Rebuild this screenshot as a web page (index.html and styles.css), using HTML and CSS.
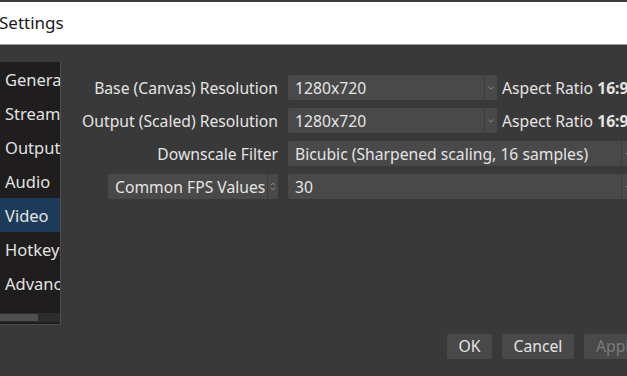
FILE: index.html
```html
<!DOCTYPE html>
<html>
<head>
<meta charset="utf-8">
<link rel="stylesheet" href="styles.css">
</head>
<body>
<div class="topline"></div>
<div class="titlebar"><span class="title">Settings</span></div>
<div class="window">
  <div class="main">
    <div class="sidebar">
      <ul class="list">
        <li class="item">General</li>
        <li class="item">Stream</li>
        <li class="item">Output</li>
        <li class="item">Audio</li>
        <li class="item selected">Video</li>
        <li class="item">Hotkeys</li>
        <li class="item">Advanced</li>
      </ul>
      <div class="hscroll"><div class="thumb"></div></div>
    </div>
    <div class="form">
      <div class="row">
        <div class="label">Base (Canvas) Resolution</div>
        <div class="field combo short"><span class="value">1280x720</span><span class="arrow"><svg width="6" height="4" viewBox="0 0 6 4"><path d="M0.5 0.8 L3 3.2 L5.5 0.8" fill="none" stroke="#8e8d8d" stroke-width="1"/></svg></span></div>
        <div class="aspect">Aspect Ratio <b>16:9</b></div>
      </div>
      <div class="row">
        <div class="label">Output (Scaled) Resolution</div>
        <div class="field combo short"><span class="value">1280x720</span><span class="arrow"><svg width="6" height="4" viewBox="0 0 6 4"><path d="M0.5 0.8 L3 3.2 L5.5 0.8" fill="none" stroke="#8e8d8d" stroke-width="1"/></svg></span></div>
        <div class="aspect">Aspect Ratio <b>16:9</b></div>
      </div>
      <div class="row">
        <div class="label">Downscale Filter</div>
        <div class="field combo long"><span class="value">Bicubic (Sharpened scaling, 16 samples)</span><span class="arrow"><svg width="6" height="4" viewBox="0 0 6 4"><path d="M0.5 0.8 L3 3.2 L5.5 0.8" fill="none" stroke="#8e8d8d" stroke-width="1"/></svg></span></div>
      </div>
      <div class="row">
        <div class="label"><div class="field fps"><span class="value">Common FPS Values</span><span class="updown"><svg width="6" height="9" viewBox="0 0 6 9"><path d="M1 3.2 L3 1.2 L5 3.2 M1 5.8 L3 7.8 L5 5.8" fill="none" stroke="#8e8d8d" stroke-width="1"/></svg></span></div></div>
        <div class="field combo long"><span class="value">30</span><span class="arrow"><svg width="6" height="4" viewBox="0 0 6 4"><path d="M0.5 0.8 L3 3.2 L5.5 0.8" fill="none" stroke="#8e8d8d" stroke-width="1"/></svg></span></div>
      </div>
    </div>
  </div>
  <div class="buttons">
    <div class="btn ok">OK</div>
    <div class="btn cancel">Cancel</div>
    <div class="btn apply disabled">Apply</div>
  </div>
</div>
</body>
</html>
```

FILE: styles.css
```css
html, body {
  margin: 0;
  padding: 0;
  width: 627px;
  height: 376px;
  overflow: hidden;
  background: #3a3939;
  font-family: "Noto Sans", "Open Sans", sans-serif;
  color: #e4e4e4;
}

.topline {
  height: 2px;
  background: #3c3c3c;
}

.titlebar {
  height: 42px;
  background: #ffffff;
  border-bottom: 1px solid #9a9a9a;
  display: flex;
  align-items: center;
}

.title {
  font-size: 17px;
  color: #1a1a1a;
  margin-left: -1px;
  margin-top: -2px;
}

.window {
  height: 331px;
  display: flex;
  flex-direction: column;
}

.main {
  display: flex;
  flex: 1;
}

.sidebar {
  width: 60px;
  flex-shrink: 0;
  height: 262px;
  margin-top: 17px;
  background: #1f1d1d;
  border-right: 1px solid #4d4c4c;
  border-bottom: 1px solid #4d4c4c;
  display: flex;
  flex-direction: column;
  overflow: hidden;
}

.list {
  list-style: none;
  margin: 0;
  padding: 0;
  flex: 1;
}

.item {
  height: 34px;
  line-height: 36px;
  padding-left: 5px;
  font-size: 16.5px;
  white-space: nowrap;
  overflow: hidden;
  color: #e2e2e2;
}

.item.selected {
  background: #1d3b59;
}

.hscroll {
  height: 9px;
  background: #2d2b2b;
  margin-bottom: 2px;
}

.thumb {
  width: 38px;
  height: 7px;
  margin-top: 1px;
  background: #4f4e4e;
}

.form {
  flex: 1;
  padding-top: 30px;
  display: flex;
  flex-direction: column;
  gap: 8px;
  min-width: 0;
}

.row {
  display: flex;
  align-items: center;
  gap: 10px;
  height: 25px;
  white-space: nowrap;
}

.label {
  width: 217px;
  flex-shrink: 0;
  text-align: right;
  font-size: 15.7px;
  display: flex;
  justify-content: flex-end;
}

.field {
  height: 25px;
  background: #4a4949;
  border-radius: 2px;
  display: flex;
  align-items: center;
  font-size: 15.7px;
  flex-shrink: 0;
}

.value {
  flex: 1;
  padding-left: 7px;
  text-align: left;
}

.arrow {
  width: 12px;
  height: 25px;
  border-left: 1px solid #3c3b3b;
  display: flex;
  align-items: center;
  justify-content: center;
}

.combo.short {
  width: 209px;
}

.combo.long {
  width: 346px;
}

.aspect {
  font-size: 15.7px;
  margin-left: -5px;
}

.aspect b {
  font-weight: bold;
}

.fps {
  width: 170px;
}

.updown {
  width: 10px;
  height: 25px;
  border-left: 1px solid #3c3b3b;
  display: flex;
  align-items: center;
  justify-content: center;
}

.buttons {
  display: flex;
  gap: 10px;
  padding-left: 447px;
  margin-bottom: 17px;
}

.btn {
  height: 25px;
  line-height: 24px;
  background: #4a4949;
  border-radius: 2px;
  font-size: 15.7px;
  text-align: center;
  flex-shrink: 0;
}

.ok { width: 45px; }
.cancel { width: 72px; }
.apply { width: 70px; text-align: left; padding-left: 12px; box-sizing: border-box; }

.disabled {
  color: #7b7a7a;
}
```
